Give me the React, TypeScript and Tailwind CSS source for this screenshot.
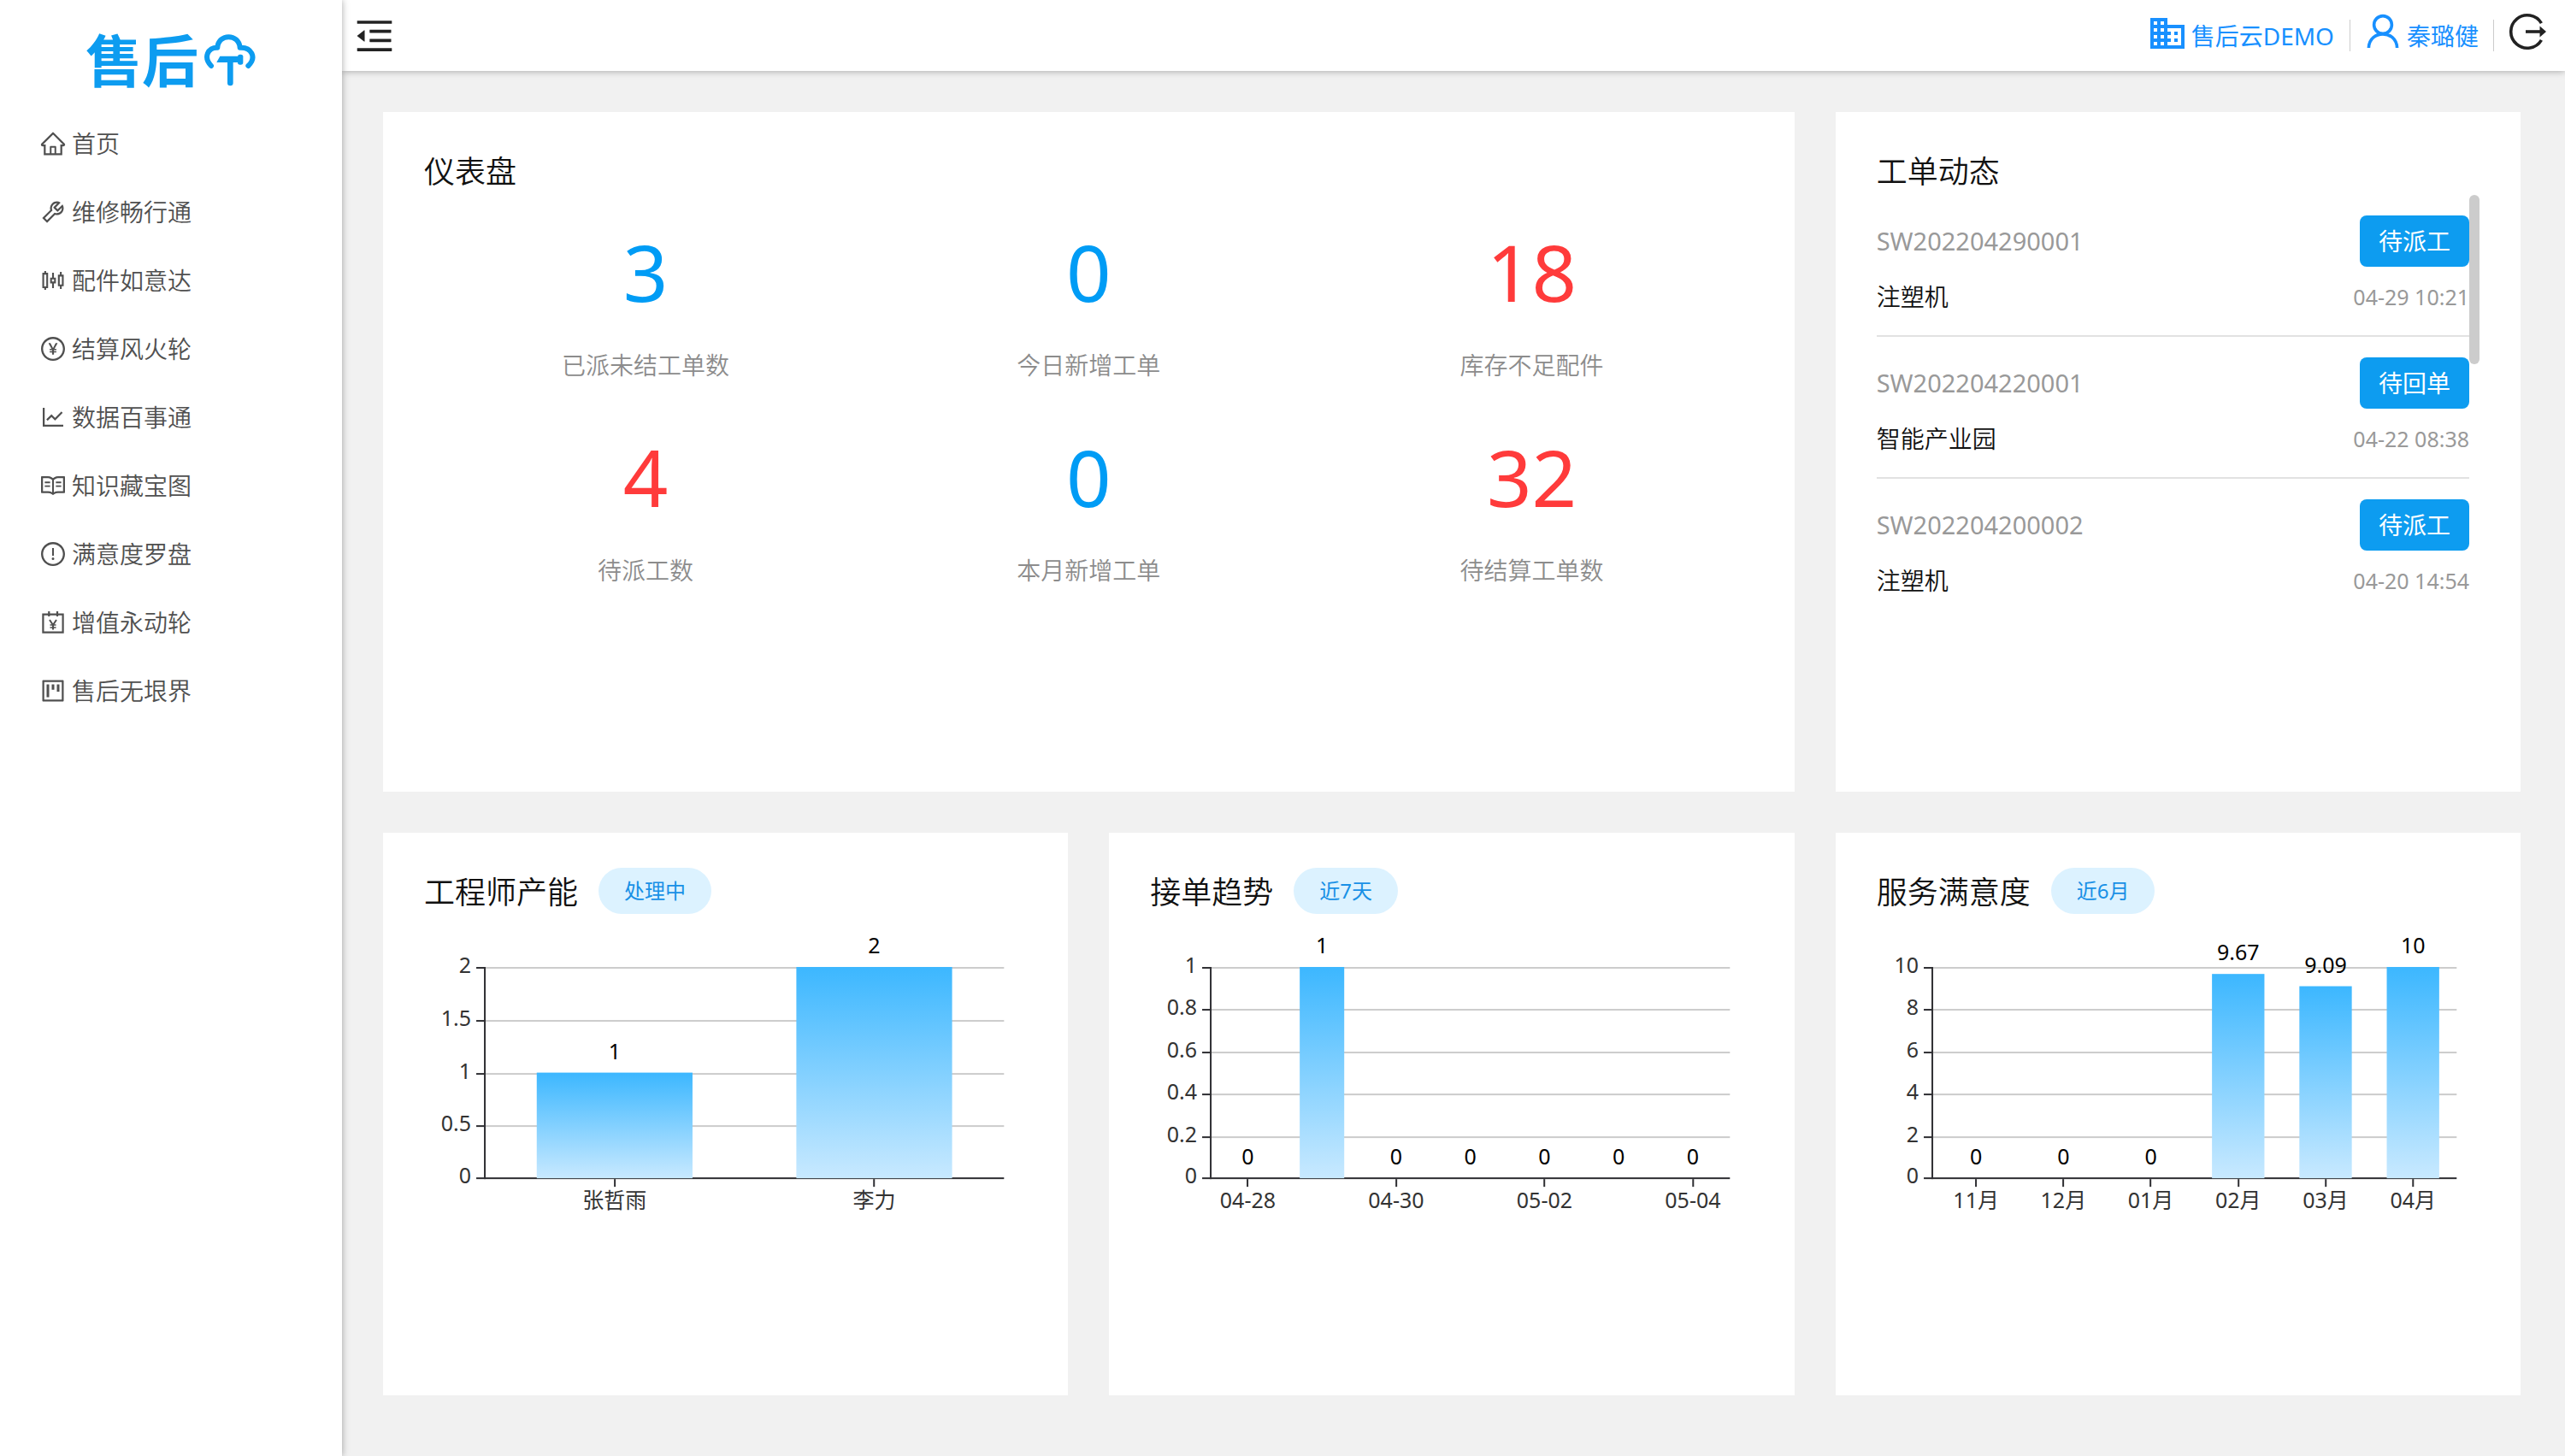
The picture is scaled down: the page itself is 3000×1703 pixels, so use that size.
import React from "react";
import {
  AiOutlineExclamationCircle,
  AiOutlineHome,
  AiOutlineLineChart,
  AiOutlineMenuFold,
  AiOutlinePayCircle,
  AiOutlineProject,
  AiOutlineRead,
  AiOutlineSliders,
  AiOutlineTool,
} from "react-icons/ai";
import { MdBusiness } from "react-icons/md";

function CalendarYenIcon({ size = 32 }: { size?: number }) {
  return (
    <svg viewBox="0 0 32 32" width={size} height={size} fill="none" stroke="currentColor" strokeWidth="2.2" aria-hidden="true">
      <path d="M4.400 6.600 H27.600 V27.600 H4.400 Z" />
      <path d="M11.300 3 V9 M21 3 V9" />
      <path d="M12 13 L16 19 L20 13 M16 19 V24.500" strokeWidth="2" />
      <path d="M12.500 19 H19.500 M12.500 22 H19.500" strokeWidth="1.400" />
    </svg>
  );
}

const menu: { label: string; icon: React.ComponentType<{ size?: number }> }[] = [
  { label: "首页", icon: AiOutlineHome },
  { label: "维修畅行通", icon: AiOutlineTool },
  { label: "配件如意达", icon: AiOutlineSliders },
  { label: "结算风火轮", icon: AiOutlinePayCircle },
  { label: "数据百事通", icon: AiOutlineLineChart },
  { label: "知识藏宝图", icon: AiOutlineRead },
  { label: "满意度罗盘", icon: AiOutlineExclamationCircle },
  { label: "增值永动轮", icon: CalendarYenIcon },
  { label: "售后无垠界", icon: AiOutlineProject },
];

const stats = [
  { value: 3, label: "已派未结工单数", alert: false },
  { value: 0, label: "今日新增工单", alert: false },
  { value: 18, label: "库存不足配件", alert: true },
  { value: 4, label: "待派工数", alert: true },
  { value: 0, label: "本月新增工单", alert: false },
  { value: 32, label: "待结算工单数", alert: true },
];

const orders = [
  { id: "SW202204290001", status: "待派工", name: "注塑机", time: "04-29 10:21" },
  { id: "SW202204220001", status: "待回单", name: "智能产业园", time: "04-22 08:38" },
  { id: "SW202204200002", status: "待派工", name: "注塑机", time: "04-20 14:54" },
];

type ChartData = {
  id: string;
  title: string;
  tag: string;
  axisX: number;
  max: number;
  ticks: number[];
  labelEvery: number;
  bars: { label: string; value: number }[];
};

const charts: ChartData[] = [
  {
    id: "capacity",
    title: "工程师产能",
    tag: "处理中",
    axisX: 71,
    max: 2,
    ticks: [0, 0.5, 1, 1.5, 2],
    labelEvery: 1,
    bars: [
      { label: "张哲雨", value: 1 },
      { label: "李力", value: 2 },
    ],
  },
  {
    id: "trend",
    title: "接单趋势",
    tag: "近7天",
    axisX: 71,
    max: 1,
    ticks: [0, 0.2, 0.4, 0.6, 0.8, 1],
    labelEvery: 2,
    bars: [
      { label: "04-28", value: 0 },
      { label: "04-29", value: 1 },
      { label: "04-30", value: 0 },
      { label: "05-01", value: 0 },
      { label: "05-02", value: 0 },
      { label: "05-03", value: 0 },
      { label: "05-04", value: 0 },
    ],
  },
  {
    id: "satisfaction",
    title: "服务满意度",
    tag: "近6月",
    axisX: 65,
    max: 10,
    ticks: [0, 2, 4, 6, 8, 10],
    labelEvery: 1,
    bars: [
      { label: "11月", value: 0 },
      { label: "12月", value: 0 },
      { label: "01月", value: 0 },
      { label: "02月", value: 9.67 },
      { label: "03月", value: 9.09 },
      { label: "04月", value: 10 },
    ],
  },
];

function Logo() {
  return (
    <div className="flex h-32 items-start pt-[39px] pl-[100px] text-[#0d9cf0]">
      <span className="text-[66px] leading-[62px] font-bold">售后</span>
      <svg viewBox="714 120 186 189" className="ml-1.5 h-[63px] w-[62px]" fill="none" stroke="currentColor" aria-hidden="true">
        <path
          d="M741 234 C712 204 730 168 763 170 M763 170 C766 120 838 120 842 170 M842 170 C882 168 902 204 871 234"
          strokeWidth="18"
          strokeLinecap="round"
          strokeLinejoin="round"
        />
        <path d="M760 222 L772 200 H834 V222 Z" fill="currentColor" stroke="none" />
        <rect x="834" y="194" width="19" height="36" rx="8" fill="currentColor" stroke="none" />
        <path d="M808 212 V294" strokeWidth="20" strokeLinecap="round" />
      </svg>
    </div>
  );
}

function Sidebar() {
  return (
    <aside className="relative z-10 w-[400px] shrink-0 bg-white shadow-[0_0_8px_rgba(0,0,0,0.35)]">
      <Logo />
      <nav aria-label="主菜单">
        {menu.map(({ label, icon: Icon }) => (
          <a key={label} href="#" className="flex h-20 items-center gap-1.5 pl-[46px] text-[28px] font-[350] text-[#505050]">
            <Icon size={32} />
            {label}
          </a>
        ))}
      </nav>
    </aside>
  );
}

function Header() {
  return (
    <header className="relative flex h-[83px] items-center justify-between bg-white pr-[22px] pl-3 shadow-[0_0_8px_rgba(0,0,0,0.35)]">
      <button type="button" aria-label="收起菜单" className="text-[#222]">
        <AiOutlineMenuFold size={52} />
      </button>
      <div className="flex items-center text-[28px] text-[#1890ff]">
        <a href="#" className="flex items-center gap-1">
          <MdBusiness size={48} className="mb-1.5" />
          售后云DEMO
        </a>
        <span className="mx-[18px] h-[37px] w-px bg-[#ccc]" />
        <a href="#" className="flex items-center gap-2">
          <svg viewBox="0 0 40 42" className="mb-3 h-[42px] w-10" fill="none" stroke="currentColor" strokeWidth="3.6" aria-hidden="true">
            <circle cx="20" cy="14" r="10.4" />
            <path d="M3.4 41 C4 19.500 36 19.500 36.600 41" />
          </svg>
          秦璐健
        </a>
        <span className="mx-[17px] h-[37px] w-px bg-[#ccc]" />
        <button type="button" aria-label="退出登录" className="mb-2.5 text-[#222]">
          <svg viewBox="0 0 44 44" className="size-11" fill="none" stroke="currentColor" strokeWidth="3.6" aria-hidden="true">
            <path d="M38.400 12.200 A19.200 19.200 0 1 0 38.400 31.800" />
            <path d="M20 22 H38" />
            <path d="M36.500 15.500 L44 22 L36.500 28.500 Z" fill="currentColor" stroke="none" />
          </svg>
        </button>
      </div>
    </header>
  );
}

function Card({ title, tag, className = "", children }: { title: string; tag?: string; className?: string; children: React.ReactNode }) {
  return (
    <section className={`bg-white px-12 pt-[41px] ${className}`}>
      <div className="flex h-[54px] items-center gap-6">
        <h2 className="pt-1 text-[36px] leading-[50px] font-[350] text-[#111]">{title}</h2>
        {tag && <span className="rounded-full bg-[#dcf2ff] px-[30px] text-[24px] leading-[54px] text-[#1890e6]">{tag}</span>}
      </div>
      {children}
    </section>
  );
}

const TOP = 62;
const BASE = 309;
const RIGHT = 678;

function BarChart({ data }: { data: ChartData }) {
  const { axisX, max, ticks, bars, labelEvery, id } = data;
  const band = (RIGHT - axisX) / bars.length;
  const yOf = (v: number) => BASE - (v / max) * (BASE - TOP);
  return (
    <svg viewBox="0 0 705 360" className="block w-full text-[25px]" role="img" aria-label={data.title}>
      <defs>
        <linearGradient id={id} x1="0" y1="0" x2="0" y2="1">
          <stop offset="0" stopColor="#3cb7ff" />
          <stop offset="1" stopColor="#c8e9ff" />
        </linearGradient>
      </defs>
      {ticks.map((t) => {
        const y = t === 0 ? BASE : Math.round(yOf(t)) + 1;
        return (
          <g key={t}>
            {t > 0 && <rect x={axisX} y={y - 1} width={RIGHT - axisX} height="2" fill="#ccc" />}
            <rect x={axisX - 10} y={y - 1} width="10" height="2" fill="#2f2f33" />
            <text x={axisX - 16} y={y + 6} textAnchor="end" fill="#333">
              {t}
            </text>
          </g>
        );
      })}
      <rect x={axisX - 1} y={TOP} width="2" height={BASE - TOP + 1} fill="#2f2f33" />
      <rect x={axisX} y={BASE - 1} width={RIGHT - axisX} height="2" fill="#2f2f33" />
      {bars.map((b, i) => {
        const cx = axisX + band * (i + 0.5);
        return (
          <g key={b.label}>
            {b.value > 0 && <rect x={cx - band * 0.3} y={yOf(b.value)} width={band * 0.6} height={BASE - yOf(b.value)} fill={`url(#${id})`} />}
            <text x={cx} y={yOf(b.value) - 16} textAnchor="middle" fill="#000">
              {b.value}
            </text>
            {i % labelEvery === 0 && (
              <>
                <rect x={Math.round(cx) - 1} y={BASE + 1} width="2" height="9" fill="#2f2f33" />
                <text x={cx} y={BASE + 35} textAnchor="middle" fill="#333">
                  {b.label}
                </text>
              </>
            )}
          </g>
        );
      })}
    </svg>
  );
}

function Dashboard() {
  return (
    <Card title="仪表盘" className="col-span-2 min-h-[795px]">
      <dl className="grid grid-cols-3 gap-y-[38px] pt-5 text-center">
        {stats.map((s) => (
          <div key={s.label} className="flex flex-col-reverse gap-4">
            <dt className="text-[28px] leading-[42px] font-[350] text-[#8c8c8c]">{s.label}</dt>
            <dd className={`text-[92px] leading-[144px] ${s.alert ? "text-[#ff3b3b]" : "text-[#009cf5]"}`}>{s.value}</dd>
          </div>
        ))}
      </dl>
    </Card>
  );
}

function WorkOrders() {
  return (
    <Card title="工单动态">
      <div className="flex items-start pt-0.5">
        <ul className="min-w-0 flex-1">
          {orders.map((o) => (
            <li key={o.id} className="border-b-2 border-[#e2e2e2] py-6 last:border-b-0">
              <div className="flex items-center justify-between">
                <span className="text-[29px] text-[#999]">{o.id}</span>
                <span className="rounded-lg bg-[#0d9cf0] px-[22px] text-[28px] leading-[60px] text-white">{o.status}</span>
              </div>
              <div className="flex items-center justify-between pt-3.5 leading-[42px]">
                <span className="text-[28px] font-[350] text-[#111]">{o.name}</span>
                <span className="text-[25px] text-[#999]">{o.time}</span>
              </div>
            </li>
          ))}
        </ul>
        <div className="h-[198px] w-3 rounded-full bg-[#ccc]" />
      </div>
    </Card>
  );
}

export default function App() {
  return (
    <div
      lang="zh-CN"
      className="flex min-h-screen bg-[#f1f1f1] font-['Noto_Sans','Noto_Sans_CJK_SC',sans-serif] font-normal"
    >
      <Sidebar />
      <div className="flex min-w-0 flex-1 flex-col">
        <Header />
        <main className="grid grid-cols-3 gap-12 pt-12 pr-[52px] pb-12 pl-12">
          <Dashboard />
          <WorkOrders />
          {charts.map((c) => (
            <Card key={c.id} title={c.title} tag={c.tag} className="min-h-[658px]">
              <BarChart data={c} />
            </Card>
          ))}
        </main>
      </div>
    </div>
  );
}
